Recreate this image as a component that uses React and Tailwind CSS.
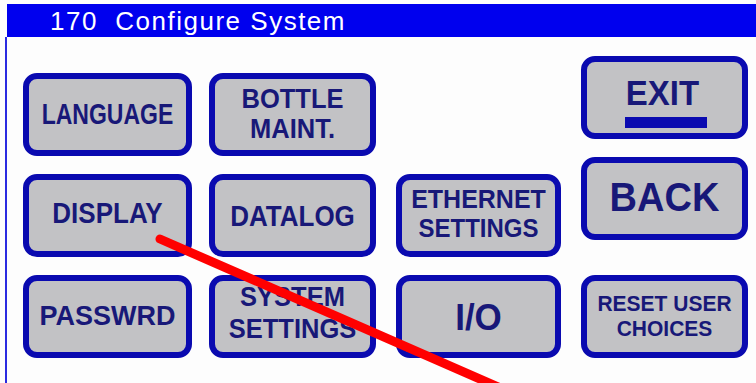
import React from "react";

const font = { fontFamily: '"Liberation Sans", Arial, sans-serif' };

function Btn({ children, className = "", text = "text-[26px]" }) {
  return (
    <div
      className={`h-[83px] rounded-[14px] border-[6px] border-[#0a0ab0] bg-[#c2c2c5] flex flex-col items-center justify-center text-center font-bold text-[#181878] leading-none ${text} ${className}`}
    >
      {children}
    </div>
  );
}

export default function App() {
  return (
    <div
      className="relative w-[756px] h-[383px] overflow-hidden bg-[#fdfdfd] pl-[5px] pt-[4px] flex flex-col"
      style={font}
    >
      <div className="ml-[2px] h-[33px] bg-[#0000ee] flex items-center pl-[43px] pt-[1px]">
        <span className="text-white text-[26px] tracking-[1.5px] whitespace-pre leading-none">
          170  Configure System
        </span>
      </div>
      <div className="flex-1 border-l-2 border-[#2a2ae0] flex pl-[16px]">
        {/* col 1 */}
        <div className="w-[169px] flex flex-col gap-[18px] pt-[36px]">
          <Btn>
            <span className="text-[23px] inline-block scale-y-[1.25]">LANGUAGE</span>
          </Btn>
          <Btn>
            <span className="-mt-[6px] inline-block scale-y-[1.12]">DISPLAY</span>
          </Btn>
          <Btn text="text-[27px]">
            <span className="inline-block scale-y-[1.05]">PASSWRD</span>
          </Btn>
        </div>
        {/* col 2 */}
        <div className="ml-[17px] w-[167px] flex flex-col gap-[18px] pt-[36px]">
          <Btn text="text-[25.5px]">
            <span className="leading-[30px] -mt-[4px] inline-block scale-y-[1.08]">BOTTLE</span>
            <span className="leading-[30px] inline-block scale-y-[1.08]">MAINT.</span>
          </Btn>
          <Btn>
            <span className="inline-block scale-y-[1.12]">DATALOG</span>
          </Btn>
          <Btn text="text-[25.5px]">
            <span className="leading-[32px] -mt-[8px] inline-block scale-y-[1.05]">SYSTEM</span>
            <span className="leading-[32px] inline-block scale-y-[1.05]">SETTINGS</span>
          </Btn>
        </div>
        {/* col 3 */}
        <div className="ml-[20px] w-[165px] flex flex-col gap-[18px] pt-[137px]">
          <Btn text="text-[25px]">
            <span className="leading-[30px] -mt-[4px] inline-block scale-y-[1.05]">ETHERNET</span>
            <span className="leading-[30px] text-[24px] inline-block scale-y-[1.05]">SETTINGS</span>
          </Btn>
          <Btn text="text-[35px]">
            <span className="inline-block scale-y-[1.05]">I/O</span>
          </Btn>
        </div>
        {/* col 4 */}
        <div className="ml-[20px] w-[167px] flex flex-col pt-[19px]">
          <Btn text="text-[33px]">
            <span className="mt-[8px] -ml-[4px] inline-block scale-y-[1.05]">EXIT</span>
            <span className="mt-[8px] ml-[2px] block w-[82px] h-[11px] bg-[#0a0ab0]" />
          </Btn>
          <Btn className="mt-[18px]" text="text-[38px]">
            <span className="-mt-[4px] inline-block scale-y-[1.05]">BACK</span>
          </Btn>
          <Btn className="mt-[35px]" text="text-[21px]">
            <span className="leading-[25px] -mt-[4px] inline-block scale-y-[1.08]">RESET USER</span>
            <span className="leading-[25px] inline-block scale-y-[1.08]">CHOICES</span>
          </Btn>
        </div>
      </div>
      <svg
        className="absolute left-0 top-0 pointer-events-none"
        width="756"
        height="383"
        viewBox="0 0 756 383"
      >
        <line
          x1="160"
          y1="239"
          x2="505"
          y2="390"
          stroke="#ff0000"
          strokeWidth="9"
          strokeLinecap="round"
        />
      </svg>
    </div>
  );
}
